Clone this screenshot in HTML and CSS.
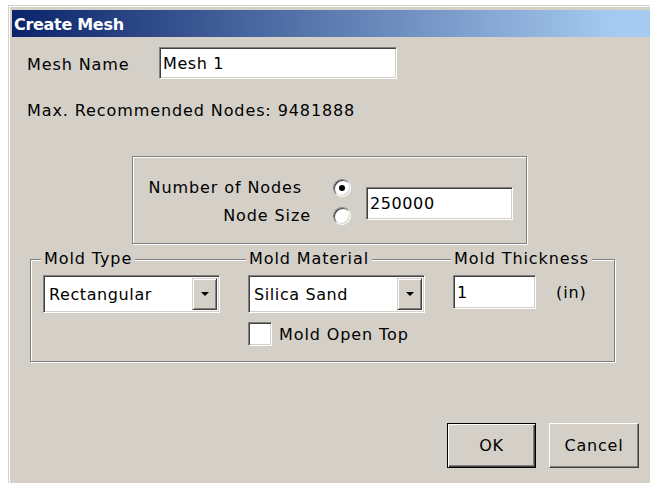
FILE: index.html
```html
<!DOCTYPE html>
<html>
<head>
<meta charset="utf-8">
<title>Create Mesh</title>
<link rel="stylesheet" href="styles.css">
</head>
<body>
<div class="window">
  <div class="titlebar">Create Mesh</div>
  <div class="content">
    <div class="row name-row">
      <span class="label name-label">Mesh Name</span>
      <div class="field name-field">Mesh 1</div>
    </div>
    <div class="row info">Max. Recommended Nodes: 9481888</div>

    <div class="group nodes">
      <div class="choice-labels">
        <span class="lbl-first">Number of Nodes</span>
        <span>Node Size</span>
      </div>
      <div class="choice-radios">
        <span class="radio checked"></span>
        <span class="radio"></span>
      </div>
      <div class="field nodes-field">250000</div>
    </div>

    <div class="group mold">
      <div class="mold-col">
        <span class="caption">Mold Type</span>
        <div class="combo">
          <span class="combo-text">Rectangular</span>
          <span class="combo-btn"><span class="arrow"></span></span>
        </div>
      </div>
      <div class="mold-col">
        <span class="caption">Mold Material</span>
        <div class="combo">
          <span class="combo-text">Silica Sand</span>
          <span class="combo-btn"><span class="arrow"></span></span>
        </div>
        <label class="check-row">
          <span class="checkbox"></span>
          <span>Mold Open Top</span>
        </label>
      </div>
      <div class="mold-col last">
        <span class="caption">Mold Thickness</span>
        <div class="thick-row">
          <div class="field thick-field">1</div>
          <span class="unit">(in)</span>
        </div>
      </div>
    </div>

    <div class="buttons">
      <button class="btn default">OK</button>
      <button class="btn">Cancel</button>
    </div>
  </div>
</div>
</body>
</html>
```
FILE: styles.css
```css
html, body {
  margin: 0;
  padding: 0;
  background: #fff;
  overflow: hidden;
}

body {
  width: 650px;
  height: 483px;
  font-family: "DejaVu Sans", "Liberation Sans", sans-serif;
  font-size: 16px;
  letter-spacing: 0.9px;
  color: #000;
}

/* classic dialog frame */
.window {
  margin: 5px 0 0 8px;
  width: 660px;
  height: 500px;
  box-sizing: border-box;
  background: #d4d0c8;
  border-left: 1px solid #d4d0c8;
  border-top: 1px solid #d4d0c8;
  box-shadow: inset 1px 1px 0 #fff;
  padding: 4px 0 0 3px;
}

.titlebar {
  height: 27px;
  line-height: 29px;
  padding-left: 2px;
  background: linear-gradient(to right, #0a246a, #a6caf0 92%);
  color: #fff;
  font-weight: bold;
  font-size: 16px;
  letter-spacing: -0.3px;
}

.content {
  position: relative;
}

.row {
  display: flex;
  align-items: center;
}

.name-row {
  margin-top: 10px;
  padding-left: 15px;
}

.name-label {
  width: 132px;
  padding-top: 3px;
}

/* sunken edit box */
.field {
  box-sizing: border-box;
  background: #fff;
  border: 1px solid;
  border-color: #808080 #fff #fff #808080;
  box-shadow: inset 1px 1px 0 #404040, inset -1px -1px 0 #d4d0c8;
  padding: 0 4px;
  display: flex;
  align-items: center;
  letter-spacing: 0.6px;
}

.name-field {
  width: 238px;
  height: 32px;
  padding-left: 3px;
}

.info {
  margin-top: 22px;
  padding-left: 15px;
  line-height: 20px;
}

/* etched group box */
.group {
  box-sizing: border-box;
  border: 1px solid #808080;
  box-shadow: inset 1px 1px 0 #fff, 1px 1px 0 #fff;
}

.nodes {
  margin: 35px 0 0 120px;
  width: 395px;
  height: 88px;
  display: flex;
  align-items: flex-start;
  padding-top: 17px;
}

.choice-labels {
  width: 166px;
  padding-left: 12px;
  display: flex;
  flex-direction: column;
  align-items: flex-end;
  line-height: 28px;
}

.lbl-first {
  margin-right: 9px;
}

.choice-radios {
  margin-left: 22px;
  display: flex;
  flex-direction: column;
}

.radio {
  position: relative;
  box-sizing: border-box;
  width: 18px;
  height: 18px;
  margin: 5px 0;
  border-radius: 50%;
  border: 1px solid;
  border-color: #808080 #fff #fff #808080;
  background: #fff;
  box-shadow: inset 1px 1px 0 #404040, inset -1px -1px 0 #d4d0c8;
}

.radio + .radio {
  margin-top: 5px;
}

.radio.checked::after {
  content: "";
  position: absolute;
  left: 5px;
  top: 5px;
  width: 6px;
  height: 6px;
  border-radius: 50%;
  background: #000;
}

.nodes-field {
  margin: 13px 0 0 15px;
  width: 147px;
  height: 33px;
  padding-left: 3px;
}

.mold {
  margin: 15px 0 0 18px;
  width: 585px;
  height: 103px;
  display: flex;
  padding-left: 12px;
}

.mold-col {
  width: 205px;
  display: flex;
  flex-direction: column;
  align-items: flex-start;
  margin-top: -11px;
}

.mold-col.last {
  width: auto;
}

.caption {
  line-height: 20px;
  background: #d4d0c8;
  padding: 0 3px;
  margin-left: -2px;
}

.combo {
  margin-top: 6px;
  box-sizing: border-box;
  width: 177px;
  height: 38px;
  background: #fff;
  border: 1px solid;
  border-color: #808080 #fff #fff #808080;
  box-shadow: inset 1px 1px 0 #404040, inset -1px -1px 0 #d4d0c8;
  display: flex;
  align-items: center;
  padding: 2px;
}

.combo-text {
  flex: 1;
  padding-left: 3px;
  letter-spacing: 0.6px;
}

/* raised drop-down button */
.combo-btn {
  box-sizing: border-box;
  width: 25px;
  height: 32px;
  background: #d4d0c8;
  border: 1px solid;
  border-color: #d4d0c8 #404040 #404040 #d4d0c8;
  box-shadow: inset 1px 1px 0 #fff, inset -1px -1px 0 #808080;
  display: flex;
  align-items: center;
  justify-content: center;
}

.arrow {
  width: 0;
  height: 0;
  border-left: 4px solid transparent;
  border-right: 4px solid transparent;
  border-top: 4px solid #000;
  margin-left: 1px;
}

.check-row {
  margin-top: 9px;
  display: flex;
  align-items: center;
  gap: 7px;
}

.checkbox {
  box-sizing: border-box;
  width: 24px;
  height: 24px;
  background: #fff;
  border: 1px solid;
  border-color: #808080 #fff #fff #808080;
  box-shadow: inset 1px 1px 0 #404040, inset -1px -1px 0 #d4d0c8;
}

.thick-row {
  margin-top: 6px;
  display: flex;
  align-items: center;
}

.thick-field {
  width: 83px;
  height: 34px;
  padding-left: 3px;
}

.unit {
  margin-left: 20px;
}

.buttons {
  margin: 61px 0 0 435px;
  display: flex;
  gap: 13px;
}

.btn {
  box-sizing: border-box;
  height: 45px;
  width: 90px;
  font-family: inherit;
  font-size: 16px;
  letter-spacing: 0.8px;
  color: #000;
  background: #d4d0c8;
  border: 1px solid;
  border-color: #fff #404040 #404040 #fff;
  box-shadow: inset -1px -1px 0 #808080, inset 1px 1px 0 #d4d0c8;
  padding: 0;
}

.btn.default {
  width: 89px;
  border: 1px solid #000;
  box-shadow: inset 1px 1px 0 #fff, inset -1px -1px 0 #404040, inset -2px -2px 0 #808080;
}
```
